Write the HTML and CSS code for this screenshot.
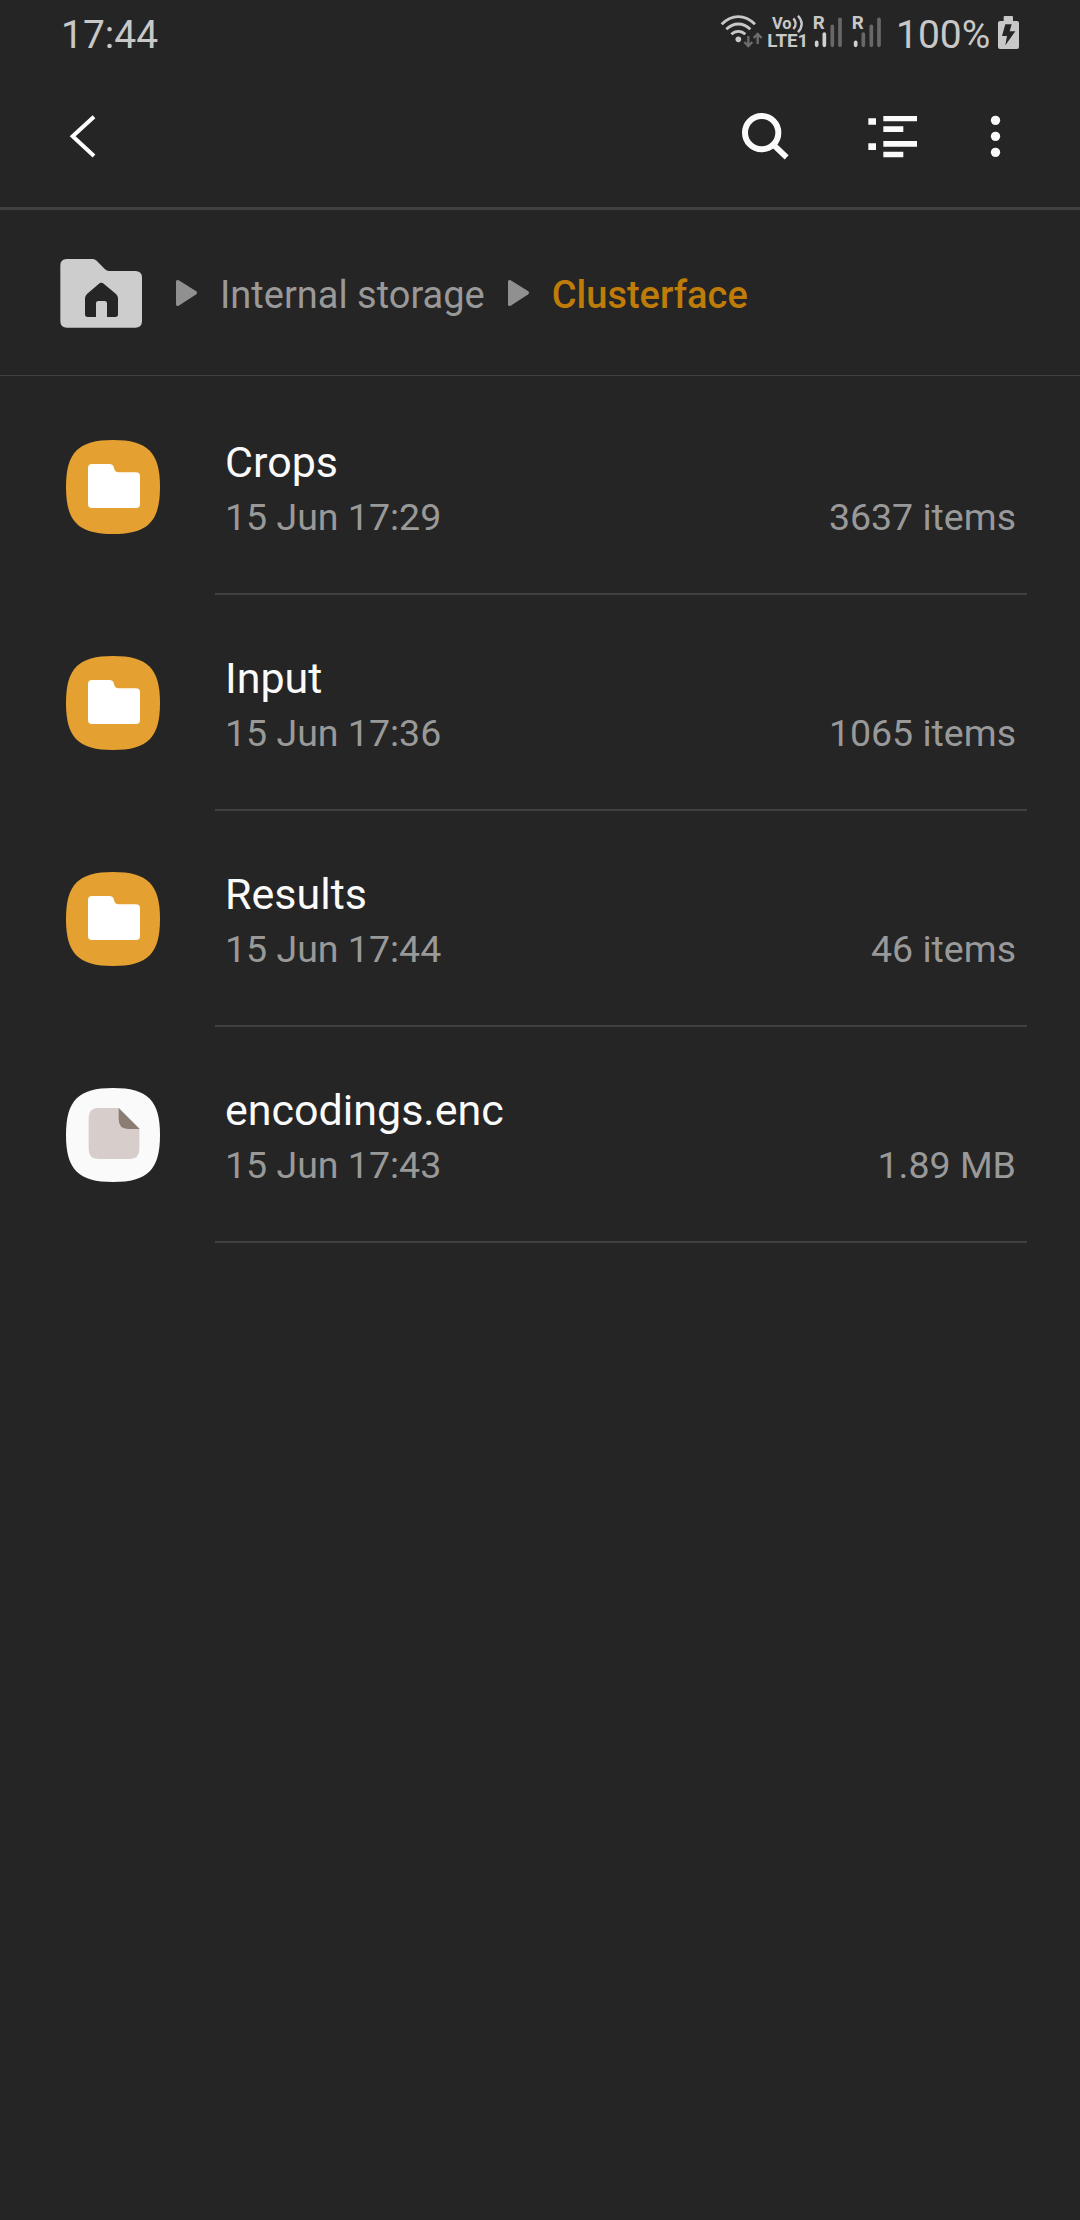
FILE: index.html
```html
<!DOCTYPE html>
<html lang="en">
<head>
<meta charset="utf-8">
<title>My Files</title>
<link rel="stylesheet" href="styles.css">
</head>
<body>
<svg class="defs" width="0" height="0" aria-hidden="true">
  <symbol id="folder" viewBox="0 0 282 282">
    <path fill="#e5a032" d="M141 0C245 0 282 37 282 141S245 282 141 282S0 245 0 141S37 0 141 0Z"/>
    <path fill="#fff" d="M78 72H132Q140 72 143 80L145 88Q148 97 157 97H210Q222 97 222 109V193Q222 204 210 204H78Q66 204 66 193V84Q66 72 78 72Z"/>
  </symbol>
  <symbol id="file" viewBox="0 0 282 282">
    <path fill="#fafafa" d="M141 0C245 0 282 37 282 141S245 282 141 282S0 245 0 141S37 0 141 0Z"/>
    <path fill="#d7cdca" d="M97 60H158L220 122V184Q220 213 191 213H97Q68 213 68 184V89Q68 60 97 60Z"/>
    <path fill="#8b7d74" d="M158 60L221 123H187Q158 123 158 94Z"/>
  </symbol>
  <symbol id="arrow" viewBox="408 117 66 87">
    <path fill="#909090" d="M408 125Q408 117 416 121L469 154Q474 158 469 163L416 197Q408 201 408 193Z"/>
  </symbol>
</svg>

<header class="status">
  <span class="clock">17:44</span>
  <div class="indicators">
    <svg class="wifi" width="43" height="36" viewBox="60 42 129 108">
      <g fill="none" stroke="#c8c8c8" stroke-width="8.5">
        <path d="M65 73Q88 50 115 50T165 73"/>
        <path d="M79 88Q95 72 115 72T151 88"/>
        <path d="M94 103Q103 94 115 94T136 103"/>
      </g>
      <circle cx="115" cy="118" r="8.5" fill="#c8c8c8"/>
      <path fill="none" stroke="#6c6c6c" stroke-width="7" d="M145 108V137M133 126L145 138L157 126M173 132V103M161 114L173 102L185 114"/>
    </svg>
    <svg class="volte" width="40" height="36" viewBox="201 42 120 108">
      <g class="tiny">
        <text x="216" y="86" font-size="50" textLength="59" lengthAdjust="spacingAndGlyphs">Vo</text>
        <text x="202" y="141" font-size="54" textLength="123" lengthAdjust="spacingAndGlyphs">LTE1</text>
      </g>
      <path fill="none" stroke="#c8c8c8" stroke-width="7" d="M280 55Q294 70 280 87M294 47Q316 71 294 97"/>
    </svg>
    <svg class="signal" width="31" height="36" viewBox="336 42 93 108">
      <g class="tiny"><text x="338" y="86" font-size="54" textLength="36" lengthAdjust="spacingAndGlyphs">R</text></g>
      <g stroke-width="11" stroke-linecap="round" fill="none">
        <path stroke="#d0d0d0" d="M350 127V136M373 102V136"/>
        <path stroke="#686868" d="M397 79V136M420 58V136"/>
      </g>
    </svg>
    <svg class="signal second" width="31" height="36" viewBox="453 42 93 108">
      <g class="tiny"><text x="455" y="86" font-size="54" textLength="36" lengthAdjust="spacingAndGlyphs">R</text></g>
      <g stroke-width="11" stroke-linecap="round" fill="none">
        <path stroke="#d0d0d0" d="M467 127V136"/>
        <path stroke="#686868" d="M490 102V136M514 79V136M537 58V136"/>
      </g>
    </svg>
    <span class="percent">100%</span>
    <svg class="battery" width="21" height="36" viewBox="894 42 63 108">
      <path fill="#c8c8c8" d="M911 51Q911 48 914 48H936Q939 48 939 51V63H951Q957 63 957 69V141Q957 147 951 147H900Q894 147 894 141V69Q894 63 900 63H911Z"/>
      <path fill="#252525" d="M916 73H935L929 94H946L916 136L921 108H906Z"/>
    </svg>
  </div>
</header>

<nav class="toolbar">
  <svg width="26" height="48" viewBox="90 336 78 144"><path fill="none" stroke="#fff" stroke-width="12" d="M162 350L98 409L162 468"/></svg>
  <div class="actions">
    <svg width="49" height="48" viewBox="123 66 147 144"><g fill="none" stroke="#fafafa"><circle cx="185" cy="128" r="50" stroke-width="18"/><path stroke-width="17" d="M219 163L260 202"/></g></svg>
    <svg width="51" height="48" viewBox="501 66 153 144"><path fill="#fafafa" d="M505 85H528V104H505ZM550 78H651V94H550ZM550 109H610V126H550ZM505 160H528V180H505ZM550 153H651V170H550ZM550 185H610V202H550Z"/></svg>
    <svg width="11" height="48" viewBox="870 66 33 144"><g fill="#fafafa"><circle cx="886.5" cy="91" r="14"/><circle cx="886.5" cy="139" r="14"/><circle cx="886.5" cy="187" r="14"/></g></svg>
  </div>
</nav>

<nav class="path">
  <svg width="82" height="71" viewBox="60 54 246 213">
    <path fill="#cdcdcd" d="M80 57H158Q165 57 170 62L195 88Q200 93 207 93H286Q306 93 306 113V243Q306 263 286 263H81Q61 263 61 243V77Q61 57 80 57Z"/>
    <path fill="#252525" d="M176 132Q184 125 192 132L228 162Q234 168 234 175V223Q234 231 226 231H201V190Q201 183 194 183H175Q168 183 168 190V231H143Q135 231 135 223V175Q135 168 141 162Z"/>
  </svg>
  <svg class="sep first" width="22" height="29"><use href="#arrow"/></svg>
  <span class="crumb">Internal storage</span>
  <svg class="sep" width="22" height="29"><use href="#arrow"/></svg>
  <span class="crumb current">Clusterface</span>
</nav>

<main class="list">
  <div class="row">
    <svg class="icon"><use href="#folder"/></svg>
    <div class="info"><div class="name">Crops</div><div class="meta"><span>15 Jun 17:29</span><span>3637 items</span></div></div>
  </div>
  <div class="row">
    <svg class="icon"><use href="#folder"/></svg>
    <div class="info"><div class="name">Input</div><div class="meta"><span>15 Jun 17:36</span><span>1065 items</span></div></div>
  </div>
  <div class="row">
    <svg class="icon"><use href="#folder"/></svg>
    <div class="info"><div class="name">Results</div><div class="meta"><span>15 Jun 17:44</span><span>46 items</span></div></div>
  </div>
  <div class="row">
    <svg class="icon"><use href="#file"/></svg>
    <div class="info"><div class="name">encodings.enc</div><div class="meta"><span>15 Jun 17:43</span><span>1.89 MB</span></div></div>
  </div>
</main>
</body>
</html>
```
FILE: styles.css
```css
* { box-sizing: border-box; }
body {
  margin: 0;
  min-height: 2220px;
  background: #252525;
  color: #fafafa;
  font-family: Roboto, "Liberation Sans", sans-serif;
}
svg { display: block; flex: none; overflow: visible; }
.defs { display: none; }

.status {
  display: flex;
  justify-content: space-between;
  height: 65px;
  padding: 10px 61px 0 61px;
  font-size: 39px;
  line-height: 50px;
  color: #c8c8c8;
}
.indicators { display: flex; }
.indicators svg { margin-top: 4px; }
.indicators .volte { margin-left: 4px; }
.indicators .signal { margin-left: 5px; }
.indicators .second { margin-left: 8px; }
.percent { width: 116px; padding-left: 14px; }
.tiny { fill: #c8c8c8; font-weight: 700; }

.toolbar {
  display: flex;
  justify-content: space-between;
  align-items: center;
  height: 145px;
  padding: 0 79px 0 70px;
  border-bottom: 3px solid #404040;
}
.actions { display: flex; }
.actions svg + svg { margin-left: 77px; }
.actions svg:last-child { margin-left: 72px; }

.path {
  display: flex;
  align-items: center;
  height: 166px;
  padding: 2px 0 0 60px;
  border-bottom: 1px solid #404040;
  font-size: 38px;
  line-height: 50px;
  color: #999;
}
.sep { margin-left: 23px; }
.first { margin-left: 34px; }
.crumb { margin: 2px 0 0 22px; }
.current { color: #bf7c09; font-weight: 500; }

.list { padding-top: 3px; }
.row {
  display: flex;
  height: 216px;
  padding: 0 53px 0 66px;
}
.icon { width: 94px; height: 94px; margin: 61px 55px 0 0; }
.info {
  flex: 1;
  padding: 58px 11px 0 10px;
  border-bottom: 2px solid #404040;
}
.name { font-size: 43px; line-height: 50px; }
.meta {
  display: flex;
  justify-content: space-between;
  margin-top: 5px;
  font-size: 37.5px;
  line-height: 50px;
  color: #999;
}
```
